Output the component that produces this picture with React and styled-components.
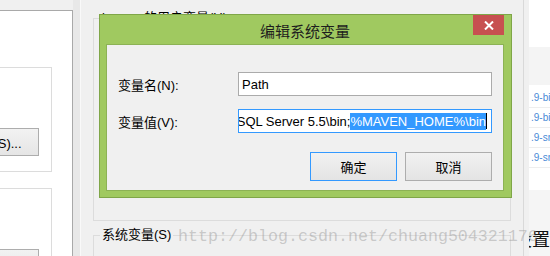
import React from "react";
import styled, { createGlobalStyle } from "styled-components";

const GlobalStyle = createGlobalStyle`
  html, body {
    margin: 0;
    padding: 0;
  }
  body {
    width: 550px;
    height: 256px;
    overflow: hidden;
    background: #f0f0f0;
    font-family: "Liberation Sans", "Noto Sans CJK SC", sans-serif;
    font-size: 13px;
    color: #000;
  }
`;

const fileRows = [".9-bin", ".9-bin", ".9-src", ".9-src"];

const App = () => {
  return (
    <Screen>
      <GlobalStyle />

      <LeftPane>
        <LeftCard>
          <ListBox $height={105}>
            <SideButton>新建(S)...</SideButton>
          </ListBox>
          <ListBox $height={100}>
            <SideButton>新建(W)...</SideButton>
          </ListBox>
        </LeftCard>
      </LeftPane>

      <Splitter />

      <Main>
        <GroupBox $height={211}>
          <Legend>lenovo 的用户变量(U)</Legend>
        </GroupBox>
        <GroupBox $height={60} $gap={6}>
          <Legend>系统变量(S)</Legend>
        </GroupBox>
      </Main>

      <Gutter />

      <RightPanel>
        <PanelTop />
        <PanelHeader />
        <FileList>
          {fileRows.map((name, idx) => (
            <FileRow key={idx}>{name}</FileRow>
          ))}
        </FileList>
        <PanelBottom>
          <BigText>设置</BigText>
        </PanelBottom>
      </RightPanel>

      <Dialog>
        <TitleBar>
          <span />
          <Title>编辑系统变量</Title>
          <CloseButton>
            <svg width="10" height="9" viewBox="0 0 10 9">
              <path d="M1 0.5 L9 8.5 M9 0.5 L1 8.5" stroke="#fff" strokeWidth="2" />
            </svg>
          </CloseButton>
        </TitleBar>
        <DialogBody>
          <FieldGrid>
            <FieldLabel>变量名(N):</FieldLabel>
            <TextBox>Path</TextBox>
            <FieldLabel>变量值(V):</FieldLabel>
            <TextBox $focused>
              <span>C:\Program Files\MySQL\;SQL Server 5.5\bin;</span>
              <Selection>%MAVEN_HOME%\bin</Selection>
              <Caret />
            </TextBox>
          </FieldGrid>
          <ButtonRow>
            <DialogButton $primary>确定</DialogButton>
            <DialogButton>取消</DialogButton>
          </ButtonRow>
        </DialogBody>
      </Dialog>

      <Watermark>http://blog.csdn.net/chuang504321176</Watermark>
    </Screen>
  );
};

const Screen = styled.div`
  position: relative;
  display: flex;
  width: 550px;
  height: 256px;
  overflow: hidden;
  background: #f0f0f0;
`;

/* left window, partly visible */
const LeftPane = styled.div`
  width: 73px;
  flex-shrink: 0;
  padding-top: 10px;
  box-sizing: border-box;
  display: flex;
  flex-direction: column;
`;

const LeftCard = styled.div`
  flex: 1;
  background: #fff;
  border-top: 1px solid #a9a9a9;
  border-right: 1px solid #a9a9a9;
  padding-top: 56px;
  overflow: hidden;
  display: flex;
  flex-direction: column;
  gap: 16px;
`;

const ListBox = styled.div`
  flex-shrink: 0;
  margin-left: -12px;
  width: 64px;
  height: ${({ $height }) => $height}px;
  box-sizing: border-box;
  border: 1px solid #dcdcdc;
  padding: 60px 12px 0 0;
  display: flex;
  flex-direction: column;
  align-items: flex-end;
`;

const SideButton = styled.div`
  flex-shrink: 0;
  width: 89px;
  height: 28px;
  box-sizing: border-box;
  border: 1px solid #adadad;
  background: linear-gradient(#f2f2f2, #e5e5e5);
  display: flex;
  align-items: center;
  justify-content: center;
  white-space: nowrap;
  font-size: 13px;
`;

const Splitter = styled.div`
  width: 8px;
  flex-shrink: 0;
  box-sizing: border-box;
  background: #e8e8e8;
  border-right: 1px solid #f9f9f9;
`;

/* main window behind the dialog */
const Main = styled.div`
  width: 443px;
  flex-shrink: 0;
  box-sizing: border-box;
  border-right: 1px solid #d9d9d9;
  padding: 10px 12px 0 12px;
  display: flex;
  flex-direction: column;
`;

const GroupBox = styled.fieldset`
  margin: ${({ $gap }) => ($gap ? `${$gap}px` : "0")} 0 0 0;
  padding: 0;
  min-width: 0;
  box-sizing: border-box;
  height: ${({ $height }) => $height}px;
  flex-shrink: 0;
  border: 1px solid #dcdcdc;
`;

const Legend = styled.legend`
  margin-left: 6px;
  padding: 0 2px;
  font-size: 13px;
  line-height: 16px;
  white-space: nowrap;
`;

const Gutter = styled.div`
  width: 5px;
  flex-shrink: 0;
  background: #f0f0f0;
`;

const RightPanel = styled.div`
  flex: 1;
  display: flex;
  flex-direction: column;
  overflow: hidden;
  background: #fff;
`;

const PanelTop = styled.div`
  height: 47px;
  flex-shrink: 0;
`;

const PanelHeader = styled.div`
  height: 38px;
  flex-shrink: 0;
  background: #f4f4f4;
`;

const FileList = styled.div`
  padding-top: 3px;
  height: 105px;
  box-sizing: border-box;
  flex-shrink: 0;
`;

const FileRow = styled.div`
  height: 20px;
  box-sizing: border-box;
  border-bottom: 1px solid #eeeeee;
  padding-left: 2px;
  font-size: 10px;
  line-height: 20px;
  color: #4a8ad6;
  white-space: nowrap;
`;

const PanelBottom = styled.div`
  flex: 1;
  background: #f5f5f5;
  padding-top: 40px;
`;

const BigText = styled.div`
  margin-left: -15px;
  font-size: 18px;
  line-height: 20px;
  color: #111;
  white-space: nowrap;
`;

/* dialog window over the page */
const Dialog = styled.div`
  position: absolute;
  left: 99px;
  top: 14px;
  width: 413px;
  height: 184px;
  box-sizing: border-box;
  background: #a0c960;
  border: 1px solid #7fa648;
  padding: 0 7px 6px 6px;
  display: flex;
  flex-direction: column;
`;

const TitleBar = styled.div`
  height: 29px;
  flex-shrink: 0;
  display: grid;
  grid-template-columns: 1fr auto 1fr;
  align-items: center;
`;

const Title = styled.div`
  font-size: 15px;
  color: #1e1e1e;
  padding-top: 1px;
`;

const CloseButton = styled.div`
  justify-self: end;
  align-self: start;
  width: 31px;
  height: 20px;
  background: #c75050;
  display: flex;
  align-items: center;
  justify-content: center;
`;

const DialogBody = styled.div`
  flex: 1;
  background: #f0f0f0;
  border: 1px solid #8cb255;
  padding: 27px 11px 0 11px;
  display: flex;
  flex-direction: column;
`;

const FieldGrid = styled.div`
  display: grid;
  grid-template-columns: 120px 254px;
  grid-auto-rows: 24px;
  row-gap: 13px;
  align-items: center;
`;

const FieldLabel = styled.div`
  font-size: 13px;
  color: #000;
  white-space: nowrap;
`;

const TextBox = styled.div`
  height: 24px;
  box-sizing: border-box;
  background: #fff;
  border: 1px solid ${({ $focused }) => ($focused ? "#3399ff" : "#ababab")};
  padding: 0 4px 0 3px;
  display: flex;
  align-items: center;
  justify-content: ${({ $focused }) => ($focused ? "flex-end" : "flex-start")};
  overflow: hidden;
  white-space: nowrap;
  font-size: 13px;
  line-height: 17px;
  color: #000;
  & > span {
    flex-shrink: 0;
  }
`;

const Selection = styled.span`
  background: #3399ff;
  color: #fff;
`;

const Caret = styled.span`
  width: 1px;
  height: 16px;
  background: #000;
  flex-shrink: 0;
`;

const ButtonRow = styled.div`
  display: flex;
  justify-content: flex-end;
  gap: 8px;
  margin-top: 19px;
`;

const DialogButton = styled.div`
  width: 87px;
  height: 29px;
  box-sizing: border-box;
  border: 1px solid ${({ $primary }) => ($primary ? "#3399ff" : "#adadad")};
  background: linear-gradient(#f1f1f1, #e4e4e4);
  display: flex;
  align-items: center;
  justify-content: center;
  font-size: 13px;
  color: #000;
`;

const Watermark = styled.div`
  position: absolute;
  left: 178px;
  top: 227px;
  font-family: "Liberation Mono", monospace;
  font-size: 16.67px;
  line-height: 20px;
  color: rgba(150, 150, 150, 0.45);
  white-space: nowrap;
  pointer-events: none;
`;

export default App;
